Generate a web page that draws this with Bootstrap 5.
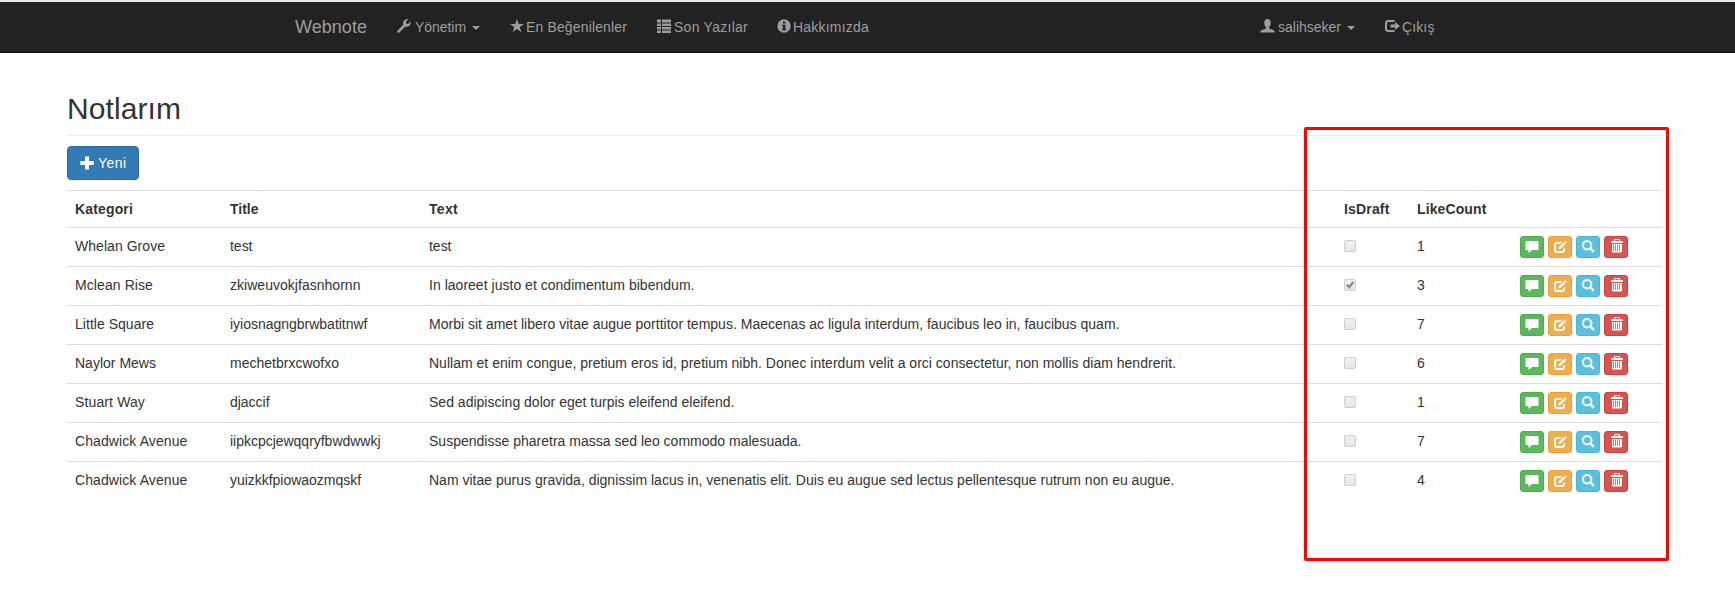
<!DOCTYPE html>
<html lang="tr">
<head>
<meta charset="utf-8">
<title>Webnote - Notlarım</title>
<link href="https://cdn.jsdelivr.net/npm/bootstrap@5.3.0/dist/css/bootstrap.min.css" rel="stylesheet">
<style>
body{font-family:"Liberation Sans",Arial,sans-serif;font-size:14px;line-height:20px;color:#333;background:#fff;overflow:hidden}
svg{display:block;fill:currentColor}
[data-fit]{white-space:nowrap}
.topbar{height:53px;background:#222;border-top:2px solid #e4e6e8;border-bottom:1px solid #080808;color:#9d9d9d;padding:0 283px 0 295px}
.topbar .navbar-brand{font-size:18px;line-height:20px;color:#9d9d9d;width:102px;padding:0;margin:0 0 1px}
.topbar .nav-link{color:#9d9d9d;padding:0;height:20px;margin-bottom:1px}
.topbar .nav-link svg{margin-top:-1px}
.dropdown-toggle::after{margin:2px 0 0 6px;border-top:4px solid;border-left:4px solid transparent;border-right:4px solid transparent}
.page{padding:37px 73px 0 67px}
.page h2{font-size:30px;line-height:33px;font-weight:400;margin:2px 0 10px}
.page hr{margin:0 0 10px;border-top:1px solid #eee;opacity:1}
.btn-new{height:34px;width:72px;background:#337ab7;border:1px solid #2e6da4;color:#fff;border-radius:4px;padding:0 0 0 12px;font-size:14px;line-height:20px}
.btn-new:hover{background:#286090;color:#fff}
.notes{table-layout:fixed;width:1595px;margin:10px 0 0;color:#333;--bs-table-color:#333;--bs-table-bg:transparent}
.notes>:not(caption)>*>*{border:0;border-top:1px solid #ddd;padding:8px;line-height:20px;vertical-align:top}
.notes th{height:37px}
.notes td{height:39px}
.tick{width:12px;height:12px;border:1px solid #cfcfcf;border-radius:2px;background:linear-gradient(#f1f1f1,#e6e6e6);margin:4px 0 0;color:#8c8c8c}
.act{width:24px;height:22px;border-radius:3px;border:1px solid;padding:0;color:#fff;display:flex;justify-content:center}
.act-c{background:#5cb85c;border-color:#4cae4c;padding-top:4px}
.act-e{background:#f0ad4e;border-color:#eea236;padding-top:4px}
.act-v{background:#5bc0de;border-color:#46b8da;padding-top:3px}
.act-d{background:#d9534f;border-color:#d43f3a;padding:2px 0 0 2px}
.act,.act:hover{color:#fff}
.highlight-box{position:absolute;left:1304px;top:127px;width:365px;height:434px;border:3px solid #f00;border-radius:2px;pointer-events:none}
</style>
</head>
<body>
<svg width="0" height="0" class="position-absolute" aria-hidden="true">
<symbol id="wrench" viewBox="0 0 14 14"><path d="M.4 11.700 6.200 6C5.600 3.600 6.500 1.500 8.300.7 9.400.2 10.500.2 11.300.5L8.900 2.900 9.400 4.700 11.200 5.100 13.600 2.600C14 4.500 13.200 6.500 11.500 7.300 10.400 7.800 9.200 7.900 8.100 7.700L2.300 13.500C1.800 14 1.200 14 .7 13.500L.4 13.200C0 12.700 0 12.200.4 11.700Z"/></symbol>
<symbol id="star" viewBox="0 0 14 14"><path d="M7 0 8.700 5H14L9.800 8.100 11.400 13.200 7 10.100 2.600 13.200 4.200 8.100 0 5H5.300Z"/></symbol>
<symbol id="list" viewBox="0 0 14 14"><path d="M0 .5h4v3H0zM5 .5h9v3H5zM0 4.500h4v2.500H0zM5 4.500h9v2.500H5zM0 8h4v2.500H0zM5 8h9v2.500H5zM0 11.500h4v2.500H0zM5 11.500h9v2.500H5z"/></symbol>
<symbol id="info" viewBox="0 0 14 14"><path fill-rule="evenodd" d="M7 .3a6.700 6.700 0 1 0 0 13.400A6.700 6.700 0 1 0 7 .3ZM6 2.500H8.400V4.600H6ZM5 5.700H8.400V10H9.300V11.300H5V10H5.900V7H5Z"/></symbol>
<symbol id="user" viewBox="0 0 14 14"><path d="M7 0C9.200 0 10.400 1.600 10.200 4.200 10.100 5.900 9.500 7.200 8.700 8V9.200C9 10.200 14 10.600 14 12.500V13.500H0V12.500C0 10.600 5 10.200 5.300 9.200V8C4.500 7.200 3.900 5.900 3.800 4.200 3.600 1.600 4.800 0 7 0Z"/></symbol>
<symbol id="logout" viewBox="0 0 15 14"><path d="M9.500 1H3A3 3 0 0 0 0 4V10A3 3 0 0 0 3 13H9.500V11H3.500Q2 11 2 9.500V4.500Q2 3 3.500 3H9.500ZM10 3 15 7 10 11V8.500H5.500V5.500H10Z"/></symbol>
<symbol id="plus" viewBox="0 0 14 14"><path d="M5 0.500H9V5H13.700V9H9V13.500H5V9H.3V5H5Z"/></symbol>
<symbol id="comment" viewBox="0 0 14 12"><path d="M1 0H13Q13.500 0 13.500.5V8.500Q13.500 9 13 9H7L3.500 12V9H1Q.5 9 .5 8.500V.5Q.5 0 1 0Z"/></symbol>
<symbol id="edit" viewBox="0 0 13 12"><path d="M8 1H3A3 3 0 0 0 0 4V9A3 3 0 0 0 3 12H8A3 3 0 0 0 11 9V6.500L9 8.500V9Q9 10 8 10H3Q2 10 2 9V4Q2 3 3 3H6.200ZM4.300 8.600 5 6 9.800 1.200 11.600 3 6.800 7.800ZM10.300.7 11 0 12.900 1.800 12.200 2.500Z"/></symbol>
<symbol id="search" viewBox="0 0 13 13"><path fill-rule="evenodd" d="M5.200 0a5.200 5.200 0 1 0 2.700 9.600L11 12.700 12.700 11 9.600 7.900A5.200 5.200 0 0 0 5.200 0ZM5.200 2a3.200 3.200 0 1 1 0 6.400 3.200 3.200 0 1 1 0-6.400Z"/></symbol>
<symbol id="trash" viewBox="0 0 12 14"><path fill-rule="evenodd" d="M3 2V1Q3 0 4 0H8Q9 0 9 1V2H11Q12 2 12 3V4H0V3Q0 2 1 2ZM4 1V2H8V1ZM1 5H11V12Q11 13.500 9.500 13.500H2.500Q1 13.500 1 12ZM2.200 5.500V12H3V5.500ZM4.200 5.500V12H5V5.500ZM6.200 5.500V12H7V5.500ZM8.200 5.500V12H9V5.500Z"/></symbol>
<symbol id="check" viewBox="0 0 10 10"><path d="M1 5.500 2.500 4 4.200 5.500 7.500 1 9.300 2.500 4.500 9Z"/></symbol>
</svg>

<nav class="topbar d-flex align-items-center">
  <a class="navbar-brand" href="#"><span data-fit="72">Webnote</span></a>
  <div class="d-flex flex-grow-1">
    <a class="nav-link dropdown-toggle d-flex align-items-center" style="width:113px" href="#"><svg width="14" height="14"><use href="#wrench"/></svg><span class="ms-1" data-fit="51">Yönetim</span></a>
    <a class="nav-link d-flex align-items-center" style="width:147px" href="#"><svg width="14" height="14"><use href="#star"/></svg><span data-fit="101" style="margin-left:2px">En Beğenilenler</span></a>
    <a class="nav-link d-flex align-items-center" style="width:120px" href="#"><svg width="14" height="14"><use href="#list"/></svg><span data-fit="74" style="margin-left:3px">Son Yazılar</span></a>
    <a class="nav-link d-flex align-items-center" href="#"><svg width="14" height="14"><use href="#info"/></svg><span data-fit="76" style="margin-left:2px">Hakkımızda</span></a>
    <a class="nav-link dropdown-toggle d-flex align-items-center ms-auto" style="width:125px" href="#"><svg width="15" height="14"><use href="#user"/></svg><span data-fit="63" style="margin-left:3px">salihseker</span></a>
    <a class="nav-link d-flex align-items-center" style="width:67px" href="#"><svg width="15" height="14"><use href="#logout"/></svg><span data-fit="32.5" style="margin-left:2px">Çıkış</span></a>
  </div>
</nav>

<main class="page">
  <h2><span data-fit="114">Notlarım</span></h2>
  <hr>
  <button class="btn btn-new d-flex align-items-center"><svg width="14" height="14"><use href="#plus"/></svg><span class="ms-1" data-fit="28.5">Yeni</span></button>
  <table class="table notes">
    <colgroup><col style="width:155px"><col style="width:199px"><col style="width:915px"><col style="width:73px"><col style="width:103px"><col style="width:150px"></colgroup>
    <thead><tr><th><span data-fit="58">Kategori</span></th><th><span data-fit="28.5">Title</span></th><th><span data-fit="29">Text</span></th><th><span data-fit="45.5">IsDraft</span></th><th><span data-fit="69.5">LikeCount</span></th><th></th></tr></thead>
    <tbody id="rows"></tbody>
  </table>
</main>
<div class="highlight-box"></div>

<script src="https://cdn.jsdelivr.net/npm/bootstrap@5.3.0/dist/js/bootstrap.bundle.min.js"></script>
<script>
// Each text is paired with its set width in pixels.
const notes = [
  [['Whelan Grove', 90], ['test', 22.5], ['test', 22.5], false, 1],
  [['Mclean Rise', 78], ['zkiweuvokjfasnhornn', 130.5], ['In laoreet justo et condimentum bibendum.', 265.5], true, 3],
  [['Little Square', 79], ['iyiosnagngbrwbatitnwf', 137.5], ['Morbi sit amet libero vitae augue porttitor tempus. Maecenas ac ligula interdum, faucibus leo in, faucibus quam.', 690.5], false, 7],
  [['Naylor Mews', 81], ['mechetbrxcwofxo', 109], ['Nullam et enim congue, pretium eros id, pretium nibh. Donec interdum velit a orci consectetur, non mollis diam hendrerit.', 747], false, 6],
  [['Stuart Way', 70], ['djaccif', 39.5], ['Sed adipiscing dolor eget turpis eleifend eleifend.', 305.5], false, 1],
  [['Chadwick Avenue', 112.5], ['iipkcpcjewqqryfbwdwwkj', 150.5], ['Suspendisse pharetra massa sed leo commodo malesuada.', 372.5], false, 7],
  [['Chadwick Avenue', 112.5], ['yuizkkfpiowaozmqskf', 131], ['Nam vitae purus gravida, dignissim lacus in, venenatis elit. Duis eu augue sed lectus pellentesque rutrum non eu augue.', 745.5], false, 4]
];
const icon = (id, w, h) => `<svg width="${w}" height="${h}"><use href="#${id}"/></svg>`;
const actions = [['c', 'comment', 14, 12], ['e', 'edit', 13, 12], ['v', 'search', 13, 13], ['d', 'trash', 12, 14]]
  .map(([k, id, w, h]) => `<button class="btn act act-${k}">${icon(id, w, h)}</button>`).join('');
document.getElementById('rows').innerHTML = notes.map(([a, b, c, draft, likes]) =>
  `<tr>${[a, b, c].map(([t, w]) => `<td><span data-fit="${w}">${t}</span></td>`).join('')}
  <td><div class="tick">${draft ? icon('check', 10, 10) : ''}</div></td><td>${likes}</td>
  <td><div class="d-flex gap-1">${actions}</div></td></tr>`).join('');
document.querySelectorAll('[data-fit]').forEach(el => {
  const natural = el.getBoundingClientRect().width;
  el.style.letterSpacing = ((el.dataset.fit - natural) / el.textContent.length).toFixed(3) + 'px';
});
</script>
</body>
</html>
